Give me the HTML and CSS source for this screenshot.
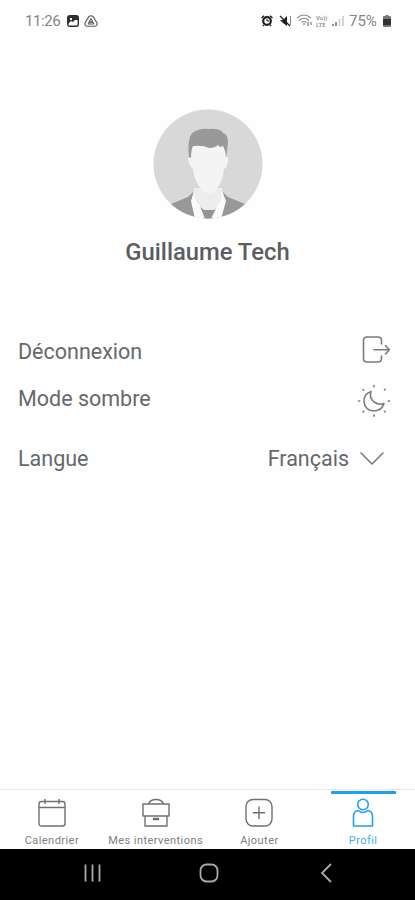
FILE: index.html
```html
<!DOCTYPE html>
<html lang="fr">
<head>
<meta charset="utf-8">
<title>Profil</title>
<link rel="stylesheet" href="styles.css">
</head>
<body>
<div class="screen">
  <header class="status">
    <span class="clock">11:26</span>
    <svg class="s-pic" width="12" height="12" viewBox="0 0 12 12"><rect x=".7" y=".7" width="10.6" height="10.6" rx="2" fill="#fff" stroke="#303030" stroke-width="1.4"/><path d="M1 1h10v4L8 5 6 7 4 6 1 9z" fill="#303030"/><path d="M3 3h2v2H3z" fill="#fff"/></svg>
    <svg class="s-tri" width="14" height="12" viewBox="0 0 14 12"><path d="M5 1.5Q7 0 9 1.5L13 8Q13.500 11 11 11.300H3Q.5 11 1 8z" fill="none" stroke="#555" stroke-width="1.1"/><path d="M7 3.500 4 9h6zM5 8l4-2M9 8 5 6" fill="none" stroke="#555"/></svg>
    <span class="spacer"></span>
    <svg class="s-alarm" width="12" height="12" viewBox="0 0 12 12"><path d="M.5 3 3 .7M11.500 3 9 .7M2 11l1-1M10 11 9 10" stroke="#202020" stroke-width="1.500"/><circle cx="6" cy="6" r="3.800" fill="#fff" stroke="#202020" stroke-width="2.200"/><path d="M6 4v2h2" fill="none" stroke="#202020"/></svg>
    <svg class="s-mute" width="13" height="12" viewBox="0 0 13 12"><path d="M1 5h3l4-4v10L4 8z" fill="#202020"/><path d="M1 1l10 10" stroke="#202020" stroke-width="1.300"/><path d="M11.500 1v9" stroke="#777" stroke-width=".9"/></svg>
    <svg class="s-wifi" width="17" height="13" viewBox="0 0 17 13"><path d="M1 4Q8 -2 15 4M3 6.500Q8 2 13 6.500M5.500 8.500Q8 6.500 10.500 8.500" fill="none" stroke="#888" stroke-width="1.100"/><path d="M8 9v2M12 8v4M15 8v3" stroke="#777" stroke-width="1.200"/></svg>
    <span class="lte"><span>Vo))</span><span>LTE</span></span>
    <svg class="s-signal" width="13" height="12" viewBox="0 0 13 12"><path d="M1 9v2M4 7v4" stroke="#777" stroke-width="1.600"/><path d="M7.500 4v7M11 1v10" stroke="#d5d5d5" stroke-width="2"/></svg>
    <span class="percent">75%</span>
    <svg class="s-batt" width="8" height="12" viewBox="0 0 8 12"><path d="M2.500 0h3v1H7q1 0 1 1v9q0 1-1 1H1q-1 0-1-1V2q0-1 1-1h1.500z" fill="#777"/><path d="M0 4h8v6H0z" fill="#333"/></svg>
  </header>

  <main class="profile">
    <svg class="avatar" width="110" height="110" viewBox="0 0 110 110">
      <defs><clipPath id="disc"><circle cx="55" cy="55" r="54.500"/></clipPath></defs>
      <g clip-path="url(#disc)">
        <path d="M0 0h110v110H0z" fill="#d8d8d8"/>
        <path d="M41 82 35 88 18 95V110H92V95L75 88 69 82z" fill="#989898"/>
        <path d="M41 79 40 89 43 110H68L71 89 69 79z" fill="#ededed"/>
        <path d="M46 97 51 101H61L66 97 61 110H51z" fill="#949494"/>
        <path d="M41 82 Q41 92 47 97L52 110H42L38 92zM69 82Q69 92 64 97L58 110H68L73 92z" fill="#fafafa"/>
        <path d="M36 49Q34 31 39 24Q47 19 56 20Q67 19 70 24Q75 25 75 34L73 50z" fill="#999"/>
        <path d="M40 37Q50 36 56 39Q62 39 65 36L67 38 70 37Q73 42 73 48Q76 47 75 52Q74 59 71 60Q70 73 62 82Q56 87 50 82Q41 73 40 60Q36 57 35 50Q35 47 38 49Q38 41 40 37z" fill="#f4f4f4"/>
      </g>
    </svg>
    <h1 class="name">Guillaume Tech</h1>

    <section class="settings">
      <div class="row row-logout">
        <span class="label">Déconnexion</span>
        <svg width="28" height="28" viewBox="0 0 28 28" class="line"><path d="M19.500 8V4.500Q19.500 1 16 1H5Q1.500 1 1.500 4.500V22.500Q1.500 26 5 26H16Q19.500 26 19.500 22.500V20M12 13.700H27M23.500 9.500 27.300 13.700 23.500 18"/></svg>
      </div>
      <div class="row row-dark">
        <span class="label">Mode sombre</span>
        <svg width="34" height="34" viewBox="0 0 34 34" class="line"><path d="M14 7.500Q6.500 10 7 18Q8 26.500 17 27Q25 26.500 27 19.500Q22 21.500 17 18Q12 14 14 7.500z"/><path d="M17 1.500v1.200M17 31v1.200M1.500 17h1.200M31.300 17h1.200M6 5.500l.7.700M27.500 6l.7-.7M6 28l.7-.7M27.500 27.300l.7.700"/></svg>
      </div>
      <div class="row row-lang">
        <span class="label">Langue</span>
        <span class="value">Français</span>
        <svg width="24" height="14" viewBox="0 0 24 14" class="line"><path d="M1 1 12 12 23 1"/></svg>
      </div>
    </section>
  </main>

  <nav class="tabs">
    <div class="tab">
      <svg width="28" height="30" viewBox="0 0 28 30"><path d="M3.500 3.500H24.500Q27 3.500 27 6V25.500Q27 28 24.500 28H3.500Q1 28 1 25.500V6Q1 3.500 3.500 3.500zM1 9.500H27M7 1v5M21 1v5"/></svg>
      <span>Calendrier</span>
    </div>
    <div class="tab">
      <svg width="28" height="30" viewBox="0 0 28 30"><path d="M1 6H27V18H1zM3 18V28H25V18M6.500 6Q8 1.500 14 1.500T21.500 6M11.500 20.500h5v1h-5z"/></svg>
      <span>Mes interventions</span>
    </div>
    <div class="tab">
      <svg width="28" height="30" viewBox="0 0 28 30"><rect x="1" y="1.500" width="26" height="26.500" rx="7"/><path d="M14 8.500v12.500M7.800 14.800H20.200"/></svg>
      <span>Ajouter</span>
    </div>
    <div class="tab active">
      <svg width="28" height="30" viewBox="0 0 28 30"><circle cx="14" cy="6.500" r="5.300"/><path d="M9 12.500Q4.500 13.500 4.500 18V28H23.500V18Q23.500 13.500 19 12.500Q14 16.500 9 12.500z"/></svg>
      <span>Profil</span>
    </div>
  </nav>
  <footer class="system">
    <svg width="18" height="18" viewBox="0 0 18 18"><path d="M1.500 0.500v17M8.500 .5v17M15.500 .5v17"/></svg>
    <svg class="home" width="20" height="20" viewBox="0 0 20 20"><rect x="1.500" y="1.500" width="17" height="17" rx="6"/></svg>
    <svg width="12" height="20" viewBox="0 0 12 20"><path d="M11 1 2 10l9 9"/></svg>
  </footer>
</div>
</body>
</html>
```
FILE: styles.css
```css
* { box-sizing: border-box; }
body { margin: 0; background: #fefefe; font-family: Roboto, sans-serif; }
svg { display: block; flex: none; }
.screen { display: flex; flex-direction: column; width: 415px; height: 900px; overflow: hidden; }

.status { display: flex; align-items: center; height: 41px; padding: 0 24px 0 25px; color: #858585; font-size: 15px; white-space: nowrap; }
.clock { width: 42px; letter-spacing: -.4px; }
.s-tri { margin-left: 5px; }
.spacer { flex: 1; }
.s-mute { margin-left: 6px; }
.s-wifi { margin-left: 4px; }
.lte { display: flex; flex-direction: column; width: 14px; margin-left: 3px; font-size: 6px; line-height: 7px; font-weight: 500; color: #888; }
.s-signal { margin-left: 2px; }
.percent { width: 31px; margin-left: 4px; }
.s-batt { margin-left: 3px; }

.profile { flex: 1; display: flex; flex-direction: column; align-items: center; padding-top: 68px; }
.name { margin: 18px 0 0; height: 30px; line-height: 30px; font-size: 23.8px; font-weight: 500; color: #5b5d61; white-space: nowrap; }
.settings { width: 100%; margin-top: 60px; padding: 0 24px 0 18px; color: #66686c; font-size: 21.5px; line-height: 30px; }
.row { display: flex; justify-content: space-between; }
.line { fill: none; stroke: #7a7c80; stroke-width: 1.6; stroke-linecap: round; stroke-linejoin: round; }
.row-logout { height: 47px; padding-top: 10px; }
.row-logout .line { margin: -1px 1px 0 0; }
.row-dark { height: 60px; padding-top: 10px; }
.row-dark .line { margin-top: 0; }
.row-lang { padding-top: 10px; }
.row-lang .line { margin: 8px 7px 0 11px; }
.value { margin-left: auto; }

.tabs { display: grid; grid-template-columns: repeat(4, 1fr); height: 60px; border-top: 1px solid #e8e8e8; background: #fff; }
.tab { display: flex; flex-direction: column; align-items: center; padding-top: 8px; font-size: 11px; letter-spacing: .45px; line-height: 13px; color: #7b7d81; white-space: nowrap; }
.tab svg { fill: none; stroke: #6d6f73; stroke-width: 1.4; stroke-linejoin: round; margin-bottom: 6px; }
.active { width: 65px; margin: 1px auto 0; justify-self: center; border-top: 3px solid #1ea0ee; padding-top: 4px; color: #45b0f0; border-radius: 1px; }
.active svg { stroke: #1ea0ee; stroke-width: 1.6; }

.system { display: flex; align-items: center; height: 51px; padding: 0 83px 3px 84px; justify-content: space-between; background: #000; }
.system svg { fill: none; stroke: #aaa; stroke-width: 1.8; }
.system .home { margin-right: 5px; }
```
